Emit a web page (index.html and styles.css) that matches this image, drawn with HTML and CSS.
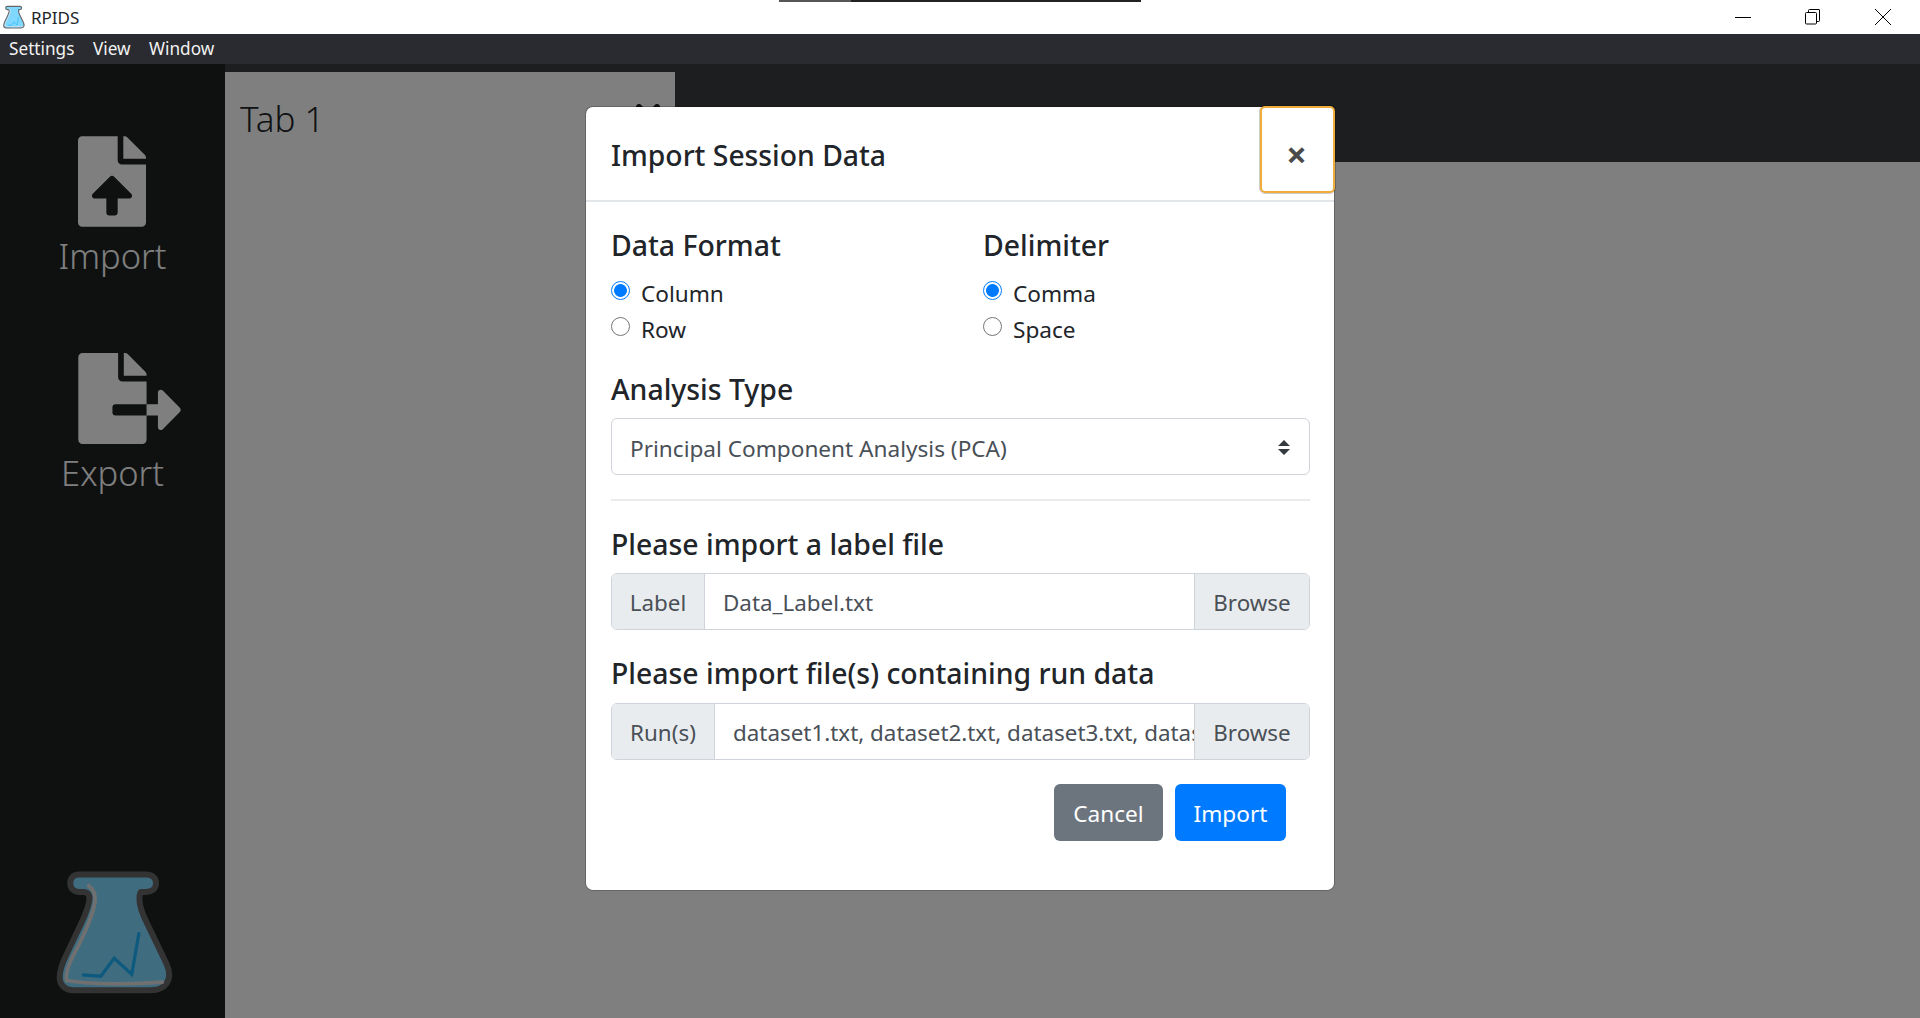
FILE: index.html
```html
<!DOCTYPE html>
<html lang="en">
<head>
  <meta charset="UTF-8">
  <title>RPIDS</title>
  <link rel="stylesheet" href="styles.css">
</head>
<body>
  <svg class="defs" width="0" height="0">
    <symbol id="flask" viewBox="80 55 355 385">
      <path class="flask-body" d="M150 85H350Q372 85 372 102Q372 118 350 120H335Q322 122 322 150Q322 180 345 225L405 350Q420 385 400 405Q385 418 350 415H130Q100 412 100 385Q100 360 120 320L165 225Q190 170 190 145Q188 122 165 120H150Q132 118 132 102Q132 85 150 85Z"/>
      <path class="flask-shine" d="M178 110Q205 130 195 170Q185 215 145 295Q105 365 112 395Q220 412 400 400"/>
      <path class="flask-line" d="M158 378L215 382L255 328L308 376L330 250"/>
    </symbol>
  </svg>

  <div class="top-line"><span></span></div>

  <header class="titlebar">
    <svg class="title-icon"><use href="#flask"/></svg>
    <span class="title-text">RPIDS</span>
    <div class="window-controls">
      <button class="win-btn" aria-label="Minimize">
        <svg width="16" height="16" viewBox="0 0 16 16"><path d="M0 8.5H16" stroke="#000"/></svg>
      </button>
      <button class="win-btn" aria-label="Restore">
        <svg width="16" height="16" viewBox="0 0 16 16" fill="none" stroke="#000"><path d="M3.5 3.5V1.5Q3.5 .5 4.5 .5H14Q14.5 .5 14.5 1V11.5Q14.5 12.5 13.5 12.5H11.5"/><rect x=".5" y="3.5" width="11" height="11.5" rx="1" fill="#fff"/></svg>
      </button>
      <button class="win-btn" aria-label="Close">
        <svg width="16" height="16" viewBox="0 0 16 16"><path d="M0 0L16 16M16 0L0 16" stroke="#000" stroke-width="1"/></svg>
      </button>
    </div>
  </header>

  <nav class="menubar">
    <span>Settings</span>
    <span>View</span>
    <span>Window</span>
  </nav>

  <div class="app">
    <aside class="sidebar">
      <svg class="side-icon import-icon" width="68" height="91" viewBox="0 0 384 512"><path d="M224 136V0H24C10.7 0 0 10.7 0 24v464c0 13.3 10.7 24 24 24h336c13.3 0 24-10.7 24-24V160H248c-13.2 0-24-10.8-24-24zm65.18 216.01H224v80c0 8.84-7.16 16-16 16h-32c-8.84 0-16-7.16-16-16v-80H94.82c-14.28 0-21.41-17.29-11.27-27.36l96.42-95.7c6.65-6.61 17.39-6.61 24.04 0l96.42 95.7c10.15 10.07 3.03 27.36-11.25 27.36zM377 105L279.1 7c-4.5-4.5-10.6-7-17-7H256v128h128v-6.1c0-6.3-2.5-12.4-7-16.9z"/></svg>
      <div class="side-label">Import</div>
      <svg class="side-icon export-icon" width="103" height="91" viewBox="0 0 576 512"><path d="M384 121.9c0-6.3-2.5-12.4-7-16.9L279.1 7c-4.5-4.5-10.6-7-17-7H256v128h128zM571 308l-95.7-96.4c-10.1-10.1-27.4-3-27.4 11.3V288h-64v64h64v65.2c0 14.3 17.3 21.4 27.4 11.3L571 332c6.6-6.6 6.6-17.4 0-24zm-379 28v-32c0-8.8 7.2-16 16-16h176V160H248c-13.2 0-24-10.8-24-24V0H24C10.7 0 0 10.7 0 24v464c0 13.3 10.7 24 24 24h336c13.3 0 24-10.7 24-24V352H208c-8.8 0-16-7.2-16-16z"/></svg>
      <div class="side-label">Export</div>
      <svg class="side-logo"><use href="#flask"/></svg>
    </aside>

    <main class="workspace">
      <div class="tabstrip">
        <div class="tab">
          <span class="tab-name">Tab 1</span>
          <svg class="tab-close" width="24" height="24" viewBox="0 0 24 24"><path d="M3 3L21 21M21 3L3 21" stroke="#212529" stroke-width="6" stroke-linecap="round"/></svg>
        </div>
      </div>
      <div class="tab-content"></div>
    </main>

    <div class="backdrop">
      <div class="modal">
        <div class="modal-header">
          <h5 class="modal-title">Import Session Data</h5>
          <button class="close">×</button>
        </div>
        <div class="modal-body">
          <div class="option-row">
            <div class="option-col">
              <h5 class="field-title">Data Format</h5>
              <label class="radio"><input type="radio" name="format" checked> Column</label>
              <label class="radio"><input type="radio" name="format"> Row</label>
            </div>
            <div class="option-col">
              <h5 class="field-title">Delimiter</h5>
              <label class="radio"><input type="radio" name="delim" checked> Comma</label>
              <label class="radio"><input type="radio" name="delim"> Space</label>
            </div>
          </div>

          <h5 class="field-title analysis-title">Analysis Type</h5>
          <div class="select-wrap">
            <select class="form-select">
              <option>Principal Component Analysis (PCA)</option>
            </select>
            <svg class="select-arrows" width="12" height="15" viewBox="0 0 12 15"><path d="M6 0L12 6H0ZM0 9H12L6 15Z"/></svg>
          </div>

          <hr class="divider">

          <h5 class="field-title file-title">Please import a label file</h5>
          <div class="input-group">
            <span class="addon label-addon">Label</span>
            <input class="file-input" type="text" value="Data_Label.txt" readonly>
            <span class="addon browse">Browse</span>
          </div>

          <h5 class="field-title file-title run-title">Please import file(s) containing run data</h5>
          <div class="input-group">
            <span class="addon run-addon">Run(s)</span>
            <input class="file-input" type="text" value="dataset1.txt, dataset2.txt, dataset3.txt, dataset4.txt" readonly>
            <span class="addon browse">Browse</span>
          </div>

          <div class="actions">
            <button class="btn btn-secondary">Cancel</button>
            <button class="btn btn-primary">Import</button>
          </div>
        </div>
      </div>
    </div>
  </div>
</body>
</html>
```

FILE: styles.css
```css
* {
  box-sizing: border-box;
}
body {
  margin: 0;
  height: 100vh;
  overflow: hidden;
  display: flex;
  flex-direction: column;
  font-family: "Noto Sans", "Open Sans", sans-serif;
  color: #212529;
  background-color: #fff;
}
.defs {
  position: absolute;
}
.top-line {
  position: absolute;
  top: 0;
  left: 779px;
  width: 362px;
  height: 2px;
  background-color: #222;
}
.top-line span {
  display: block;
  width: 72px;
  height: 2px;
  background-color: #555;
}

/* window chrome */
.titlebar {
  height: 34px;
  flex: none;
  display: flex;
  align-items: center;
  padding: 0 2px 0 3px;
}
.title-icon {
  width: 22px;
  height: 24px;
}
.title-text {
  margin-left: 6px;
  font-size: 17px;
}
.window-controls {
  margin-left: auto;
  display: flex;
}
.win-btn {
  width: 70px;
  height: 34px;
  padding: 0;
  border: none;
  background: none;
  display: flex;
  align-items: center;
  justify-content: center;
}
.menubar {
  height: 30px;
  flex: none;
  display: flex;
  align-items: center;
  gap: 18.5px;
  padding: 0 0 2px 9px;
  background-color: #2a2b30;
  color: #f2f2f2;
  font-size: 17.2px;
}

/* flask logo */
.flask-body {
  fill: #80d8ff;
  stroke: #666;
  stroke-width: 36;
  paint-order: stroke;
  stroke-linejoin: round;
}
.flask-shine {
  fill: none;
  stroke: #e0e0e0;
  stroke-width: 11;
  stroke-linecap: round;
}
.flask-line {
  fill: none;
  stroke: #1cb4ff;
  stroke-width: 10;
}

/* app */
.app {
  position: relative;
  flex: 1;
  min-height: 0;
  display: flex;
}
.sidebar {
  width: 225px;
  flex: none;
  display: flex;
  flex-direction: column;
  align-items: center;
  padding: 72px 0 19px;
  background-color: #1e2222;
}
.side-icon {
  fill: #fff;
  flex: none;
}
.import-icon {
  margin-right: 2px;
}
.side-label {
  margin-top: 7px;
  margin-bottom: 75px;
  font-size: 34.5px;
  font-weight: 300;
  line-height: 44px;
  color: #fff;
}
.export-icon {
  margin-left: 33px;
}
.side-logo {
  margin-top: auto;
  margin-left: 5px;
  width: 118px;
  height: 135px;
}
.workspace {
  flex: 1;
  display: flex;
  flex-direction: column;
}
.tabstrip {
  height: 98px;
  flex: none;
  padding-top: 8px;
  background-color: #3a3c40;
}
.tab {
  width: 450px;
  height: 90px;
  display: flex;
  justify-content: space-between;
  padding: 25px 15px 0 15px;
  background-color: #fff;
}
.tab-name {
  font-size: 35px;
  font-weight: 300;
  line-height: 44px;
}
.tab-close {
  margin-top: 7px;
}
.tab-content {
  flex: 1;
  background-color: #fff;
}
.backdrop {
  position: absolute;
  inset: 0;
  display: flex;
  justify-content: center;
  align-items: flex-start;
  padding-top: 43px;
  background-color: rgba(0, 0, 0, 0.5);
}

/* modal */
.modal {
  width: 748px;
  height: 783px;
  background-color: #fff;
  border-radius: 7px;
  box-shadow: 0 0 0 1px rgba(0, 0, 0, 0.2);
}
.modal-header {
  height: 95px;
  display: flex;
  justify-content: space-between;
  align-items: flex-start;
  padding-left: 25px;
  border-bottom: 2px solid #e3e6e9;
}
.modal-title {
  margin: 0;
  font-size: 28.3px;
  font-weight: 500;
  line-height: 97px;
}
.close {
  width: 75px;
  height: 87px;
  margin: -1px -1px 0 0;
  padding: 9px 2px 0 0;
  border: 2.5px solid #f0ad3a;
  border-radius: 5px;
  outline: 1px solid rgba(0, 0, 0, 0.2);
  background-color: #fff;
  color: #4a4a4a;
  font-family: "Noto Sans", sans-serif;
  font-size: 36px;
  font-weight: 700;
}
.modal-body {
  padding: 25px 24px 0 25px;
}
.option-row {
  display: flex;
}
.option-col {
  width: 372px;
  flex: none;
}
.field-title {
  margin: 0 0 12px;
  font-size: 28.4px;
  font-weight: 500;
  line-height: 36px;
}
.radio {
  display: flex;
  align-items: center;
  gap: 11px;
  height: 36px;
  font-size: 22.6px;
}
.radio input {
  appearance: none;
  width: 19px;
  height: 19px;
  margin: -6px 0 0;
  border: 1.5px solid #767676;
  border-radius: 50%;
  background-color: #fff;
}
.radio input:checked {
  border-color: #007bff;
  background: radial-gradient(circle, #007bff 0, #007bff 6px, #fff 6.8px);
}
.analysis-title {
  margin-top: 24px;
  margin-bottom: 11px;
}
.select-wrap {
  position: relative;
  height: 57px;
}
.form-select {
  appearance: none;
  width: 100%;
  height: 57px;
  padding: 3px 18px 0;
  border: 1.5px solid #ced4da;
  border-radius: 6px;
  background-color: #fff;
  color: #495057;
  font-family: inherit;
  font-size: 22.6px;
}
.select-arrows {
  position: absolute;
  top: 22px;
  right: 20px;
  fill: #343a40;
}
.divider {
  margin: 24px 0 25px;
  height: 2px;
  border: none;
  background-color: #e9ebed;
}
.file-title {
  margin-bottom: 11px;
}
.input-group {
  display: flex;
  height: 57px;
  overflow: hidden;
  border: 1.5px solid #ced4da;
  border-radius: 6px;
  font-size: 22.4px;
  color: #495057;
}
.addon {
  flex: none;
  display: flex;
  align-items: center;
  justify-content: center;
  padding-top: 1px;
  background-color: #e9ecef;
}
.label-addon {
  width: 93px;
  border-right: 1.5px solid #ced4da;
}
.run-addon {
  width: 103px;
  border-right: 1.5px solid #ced4da;
}
.browse {
  width: 115px;
  border-left: 1.5px solid #ced4da;
}
.file-input {
  flex: 1;
  min-width: 0;
  padding: 1px 0 0 18px;
  border: none;
  outline: none;
  background-color: #fff;
  color: #495057;
  font-family: inherit;
  font-size: 22.4px;
}
.run-title {
  margin-top: 25px;
  margin-bottom: 12px;
}
.actions {
  display: flex;
  justify-content: flex-end;
  gap: 12px;
  margin-top: 24px;
  padding-right: 24px;
}
.btn {
  height: 57px;
  padding-top: 3px;
  border: none;
  border-radius: 6px;
  color: #fff;
  font-family: inherit;
  font-size: 22.6px;
}
.btn-secondary {
  width: 109px;
  background-color: #6c757d;
}
.btn-primary {
  width: 111px;
  background-color: #007bff;
}
```
